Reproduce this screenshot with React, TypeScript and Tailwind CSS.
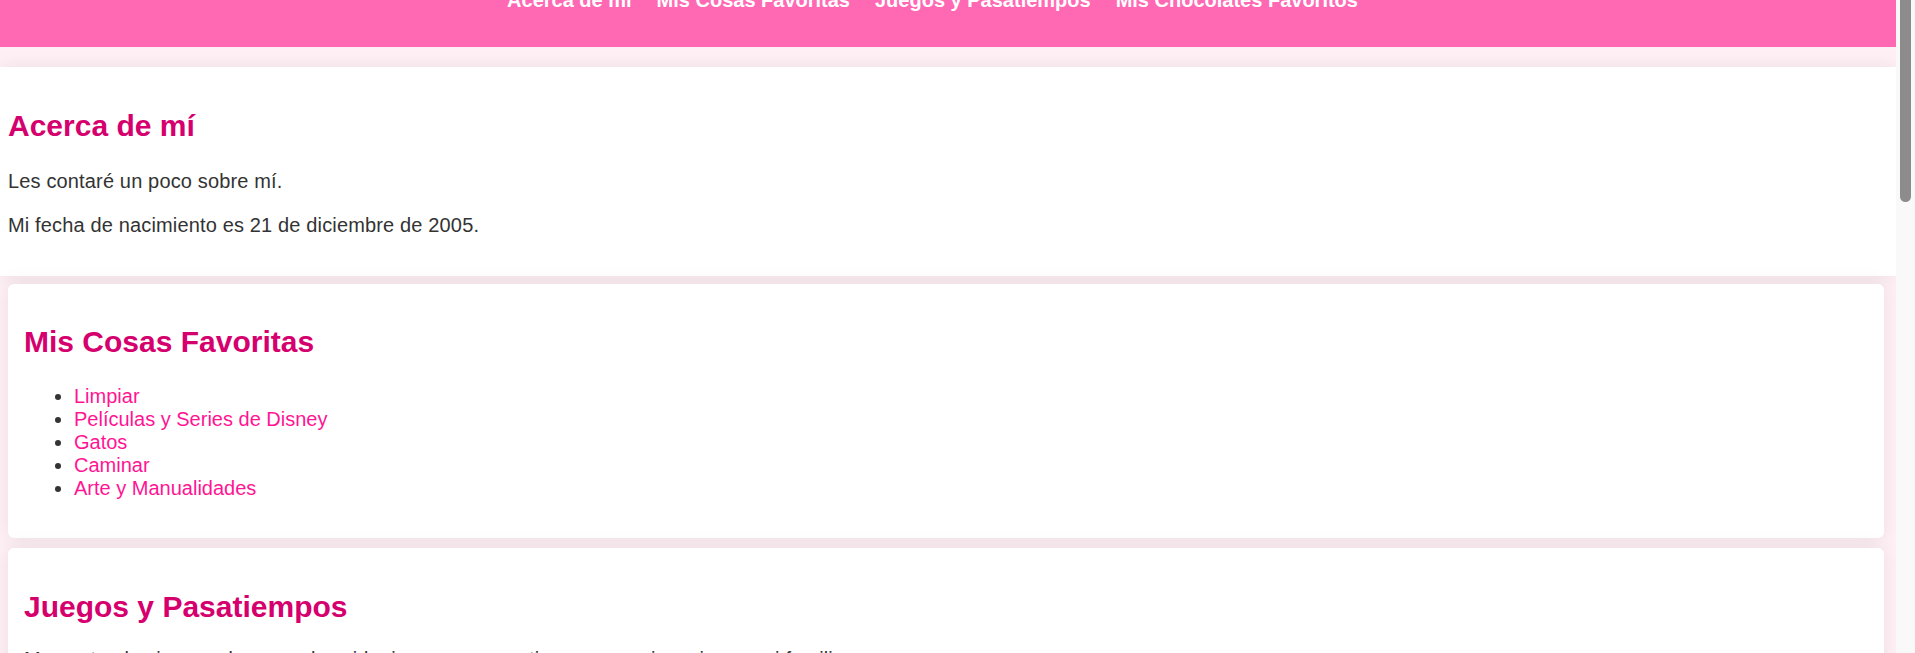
import React from "react";

const navItems = [
  "Acerca de mí",
  "Mis Cosas Favoritas",
  "Juegos y Pasatiempos",
  "Mis Chocolates Favoritos",
];

const favoritos = [
  "Limpiar",
  "Películas y Series de Disney",
  "Gatos",
  "Caminar",
  "Arte y Manualidades",
];

export default function App() {
  return (
    <div className="flex h-[653px] w-full overflow-hidden font-['Liberation_Sans',Arial,sans-serif] text-[#333333]">
      <div className="min-w-0 flex-1 overflow-hidden bg-[#fff0f5]">
        <header className="flex h-[47px] flex-col justify-end overflow-hidden bg-[#ff69b4] pb-[33px]">
          <nav>
            <ul className="flex justify-center gap-[25px] pr-[31px]">
              {navItems.map((item) => (
                <li key={item}>
                  <a className="text-[20px] font-bold leading-[23px] text-white whitespace-nowrap">
                    {item}
                  </a>
                </li>
              ))}
            </ul>
          </nav>
        </header>

        <section className="relative mt-[20px] bg-white px-[8px] pt-[17px] pb-[19px] shadow-[0_0_20px_rgba(0,0,0,0.08)]">
          <h2 className="mt-[25px] mb-[26px] text-[30px] font-bold leading-[34.5px] text-[#d5006d]">
            Acerca de mí
          </h2>
          <p className="my-[20px] text-[20px] leading-[23px] tracking-[0.15px]">
            Les contaré un poco sobre mí.
          </p>
          <p className="mt-[21px] mb-[20px] text-[20px] leading-[23px] tracking-[0.15px]">
            Mi fecha de nacimiento es 21 de diciembre de 2005.
          </p>
        </section>

        <section className="relative mt-[8px] ml-[8px] mr-[12px] rounded-[6px] bg-white px-[16px] pt-[16px] pb-[18px] shadow-[0_0_20px_rgba(0,0,0,0.08)]">
          <h2 className="mt-[25px] mb-[26px] text-[30px] font-bold leading-[34.5px] text-[#d5006d]">
            Mis Cosas Favoritas
          </h2>
          <ul className="my-[20px] list-disc pl-[50px] text-[20px] leading-[23px]">
            {favoritos.map((f) => (
              <li key={f}>
                <a className="text-[#ff1493]">{f}</a>
              </li>
            ))}
          </ul>
        </section>

        <section className="relative mt-[10px] ml-[8px] mr-[12px] rounded-[6px] bg-white px-[16px] pt-[16px] pb-[17px] shadow-[0_0_20px_rgba(0,0,0,0.08)]">
          <h2 className="mt-[26px] mb-[23px] text-[30px] font-bold leading-[34.5px] text-[#d5006d]">
            Juegos y Pasatiempos
          </h2>
          <p className="my-[20px] text-[20px] leading-[23px] tracking-[0.15px]">
            Me gustan los juegos de mesa, los videojuegos y pasar tiempo con mis amigos y mi familia.
          </p>
        </section>
      </div>

      <div className="w-[19px] shrink-0 bg-[#f9f9f9] pl-[4px] pr-[4px]">
        <div className="h-[202px] w-[11px] rounded-b-[6px] bg-[#8c8c8c]" />
      </div>
    </div>
  );
}
